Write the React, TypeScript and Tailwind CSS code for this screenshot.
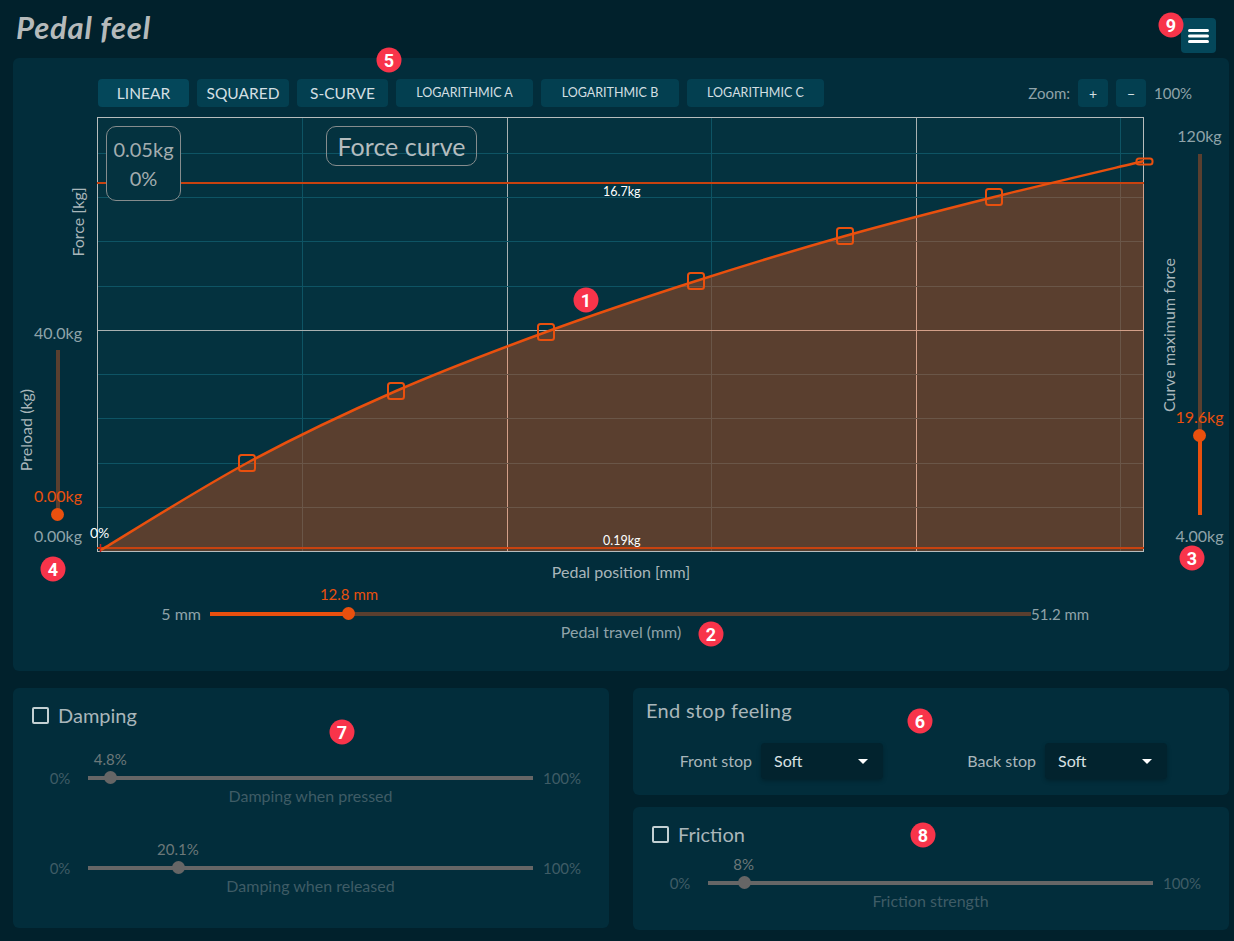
const ORIGIN = { x: 97, y: 117 };
const handles = [
  [247, 463],
  [396, 391],
  [546, 332],
  [696, 281],
  [845, 236],
  [994, 197],
];
const curvePts = [[101, 550], ...handles, [1144, 161]].map(([x, y]) => [x - ORIGIN.x, y - ORIGIN.y]);

// catmull-rom through the curve points
function curvePath(pts: number[][]) {
  let d = `M${pts[0][0]} ${pts[0][1]}`;
  for (let i = 0; i < pts.length - 1; i++) {
    const p0 = pts[i - 1] ?? pts[i];
    const p1 = pts[i];
    const p2 = pts[i + 1];
    const p3 = pts[i + 2] ?? p2;
    const c1x = p1[0] + (p2[0] - p0[0]) / 6;
    const c1y = p1[1] + (p2[1] - p0[1]) / 6;
    const c2x = p2[0] - (p3[0] - p1[0]) / 6;
    const c2y = p2[1] - (p3[1] - p1[1]) / 6;
    d += ` C${c1x} ${c1y} ${c2x} ${c2y} ${p2[0]} ${p2[1]}`;
  }
  return d;
}

const vLines = [205.3, 410, 614.5, 819, 1023.7];
const hLines = [36.4, 80.6, 124.9, 169.1, 213.4, 257.6, 301.9, 346.1, 390.4];

function GridLines({ dim, bright }: { dim: string; bright: string }) {
  return (
    <g strokeWidth="1" shapeRendering="crispEdges">
      {vLines.map((x, i) => (
        <line key={x} x1={x} y1="0" x2={x} y2="435" stroke={i % 2 === 1 ? bright : dim} />
      ))}
      {hLines.map((y, i) => (
        <line key={y} x1="0" y1={y} x2="1047" y2={y} stroke={i === 4 ? bright : dim} />
      ))}
    </g>
  );
}

function ForceChart() {
  const path = curvePath(curvePts);
  const area = `${path} L1047 435 L0 435 Z`;
  return (
    <div className="relative h-[435px] w-[1047px] bg-[#04323f]">
      <svg width="1047" height="435" viewBox="0 0 1047 435" className="block overflow-visible">
        <defs>
          <clipPath id="under-curve">
            <path d={area} />
          </clipPath>
          <clipPath id="under-limit">
            <rect x="0" y="66" width="1047" height="369" />
          </clipPath>
        </defs>
        <GridLines dim="#0e5464" bright="#a9b1b1" />
        <g clipPath="url(#under-curve)">
          <rect x="0" y="66" width="1047" height="369" fill="#5a3f2f" />
          <g clipPath="url(#under-limit)">
            <GridLines dim="#6a5648" bright="#d39f88" />
          </g>
        </g>
        <rect x="0.5" y="0.5" width="1046" height="434" fill="none" stroke="#b7bcbc" strokeWidth="1" />
        <line x1="1046.5" y1="66" x2="1046.5" y2="431" stroke="#d39f88" strokeWidth="1" />
        <line x1="0" y1="66" x2="1047" y2="66" stroke="#c8420f" strokeWidth="2" />
        <line x1="0" y1="431" x2="1047" y2="431" stroke="#c8420f" strokeWidth="2" />
        <line x1="3.5" y1="427" x2="3.5" y2="435" stroke="#c8201f" strokeWidth="1.5" />
        <path d={path} fill="none" stroke="#e9500e" strokeWidth="2.5" />
        {handles.map(([x, y]) => (
          <rect
            key={x}
            x={x - ORIGIN.x - 8}
            y={y - ORIGIN.y - 8}
            width="16"
            height="16"
            rx="2.5"
            fill="none"
            stroke="#e9500e"
            strokeWidth="2"
          />
        ))}
        <rect x="1039.5" y="41.5" width="16" height="6" rx="2.5" fill="none" stroke="#e9500e" strokeWidth="2" />
      </svg>
      <div className="absolute left-[9px] top-[9px] flex h-[75px] w-[75px] flex-col items-center justify-center rounded-[10px] border border-[#868c8d] bg-[#04323f] text-[20px] leading-[29px] text-[#a3adaf]">
        <span>0.05kg</span>
        <span>0%</span>
      </div>
      <div className="absolute left-[229px] top-[9px] flex h-[40px] w-[151px] items-center justify-center rounded-[10px] border border-[#868c8d] pt-[1px] text-[25px] text-[#b4bcbe]">
        Force curve
      </div>
      <span className="absolute left-[506px] top-[67px] text-[12.5px] leading-[16px] text-white">16.7kg</span>
      <span className="absolute left-[506px] top-[416px] text-[12.5px] leading-[16px] text-white">0.19kg</span>
      <span className="absolute left-[-7px] top-[408px] text-[14px] leading-[16px] text-white">0%</span>
    </div>
  );
}

function PresetButton({ label, width, small, active }: { label: string; width: number; small?: boolean; active?: boolean }) {
  return (
    <button
      className={`flex h-[28px] items-center justify-center rounded-[4px] pt-[1px] text-[#d3dfe2] ${
        active ? "bg-[#04475a]" : "bg-[#033f50]"
      } ${small ? "text-[12.5px]" : "text-[15.5px]"}`}
      style={{ width }}
    >
      {label}
    </button>
  );
}

function VerticalTrack({
  height,
  thumbBottom,
  value,
  filled,
}: {
  height: number;
  thumbBottom: number;
  value: string;
  filled: boolean;
}) {
  return (
    <div className="relative w-[4px] bg-[#5a3f2f]" style={{ height }}>
      {filled && <div className="absolute bottom-0 left-0 w-[4px] bg-[#e9500e]" style={{ height: thumbBottom }} />}
      <div
        className="absolute left-[-5px] h-[13px] w-[13px] rounded-full bg-[#e9500e]"
        style={{ bottom: thumbBottom - 6 }}
      />
      <span
        className="absolute left-1/2 -translate-x-1/2 whitespace-nowrap text-[16px] leading-[20px] text-[#e9500e]"
        style={{ bottom: thumbBottom + 9 }}
      >
        {value}
      </span>
    </div>
  );
}

function HSlider({
  min,
  max,
  value,
  pct,
  caption,
  labelW,
}: {
  min: string;
  max: string;
  value: string;
  pct: number;
  caption: string;
  labelW: number;
}) {
  return (
    <div className="flex flex-col">
      <div className="flex h-[20px] items-center text-[15px] text-[#3f5c66]">
        <span className="text-center" style={{ width: labelW }}>
          {min}
        </span>
        <div className="relative h-[4px] w-[445px] bg-[#666666]">
          <div
            className="absolute top-[-5px] ml-[-6px] h-[13px] w-[13px] rounded-full bg-[#666666]"
            style={{ left: `${pct}%` }}
          />
          <span
            className="absolute top-[-27px] -translate-x-1/2 whitespace-nowrap text-[15px] leading-[20px] text-[#6c7879]"
            style={{ left: `${pct}%` }}
          >
            {value}
          </span>
        </div>
        <span className="w-[58px] text-center">{max}</span>
      </div>
      <div className="text-center text-[16px] leading-[16px] text-[#3f5c66]" style={{ marginLeft: labelW, width: 445 }}>
        {caption}
      </div>
    </div>
  );
}

function Check({ label }: { label: string }) {
  return (
    <div className="flex h-[26px] items-center gap-[9px] text-[20px] text-[#a9b6ba]">
      <span className="h-[17px] w-[17px] rounded-[2px] border-2 border-[#c3d0d3]" />
      {label}
    </div>
  );
}

function StopSelect({ label, labelW }: { label: string; labelW: number }) {
  return (
    <div className="flex items-center">
      <span className="text-right text-[16px] text-[#a9b6ba]" style={{ width: labelW }}>
        {label}
      </span>
      <div className="ml-[9px] flex h-[36px] w-[122px] items-center justify-between rounded-[4px] bg-[#02232e] pl-[13px] pr-[15px] text-[16px] text-[#d7e0e2] shadow-[0_2px_4px_rgba(0,0,0,0.25)]">
        Soft
        <span className="h-0 w-0 border-x-[5px] border-t-[5px] border-x-transparent border-t-white" />
      </div>
    </div>
  );
}

const badges: [string, number, number][] = [
  ["1", 586, 300],
  ["2", 711, 634],
  ["3", 1192, 558],
  ["4", 53, 569],
  ["5", 389, 60],
  ["6", 920, 721],
  ["7", 342, 732],
  ["8", 923, 835],
  ["9", 1171, 25],
];

export default function App() {
  return (
    <div className="relative h-[941px] w-[1234px] overflow-hidden bg-[#01212c] pl-[13px] pr-[5px] font-['Lato','Liberation_Sans',sans-serif]">
      <div className="flex h-[58px] justify-between">
        <h1 className="ml-[3px] pt-[7px] text-[31px] font-bold italic leading-[40px] tracking-[0.8px] text-[#b5babb]">
          Pedal feel
        </h1>
        <button className="mr-[13px] mt-[18px] flex h-[35px] w-[35px] items-center justify-center rounded-[4px] bg-[#04475a]">
          <svg width="21" height="14" viewBox="0 0 21 14">
            <rect x="0" y="0" width="21" height="3" rx="1.5" fill="white" />
            <rect x="0" y="5.5" width="21" height="3" rx="1.5" fill="white" />
            <rect x="0" y="11" width="21" height="3" rx="1.5" fill="white" />
          </svg>
        </button>
      </div>

      <section className="h-[613px] rounded-[6px] bg-[#022d3b] pt-[21px]">
        <div className="flex h-[28px] items-center pl-[85px] pr-[38px]">
          <div className="flex gap-[8px]">
            <PresetButton label="LINEAR" width={91} active />
            <PresetButton label="SQUARED" width={92} />
            <PresetButton label="S-CURVE" width={91} />
            <PresetButton label="LOGARITHMIC A" width={137} small />
            <PresetButton label="LOGARITHMIC B" width={138} small />
            <PresetButton label="LOGARITHMIC C" width={137} small />
          </div>
          <div className="ml-auto flex items-center gap-[8px] text-[15px] text-[#8fa3a9]">
            <span>Zoom:</span>
            <button className="h-[28px] w-[30px] rounded-[4px] bg-[#033f50] text-[14px] text-[#d3dfe2]">+</button>
            <button className="h-[28px] w-[30px] rounded-[4px] bg-[#033f50] text-[14px] text-[#d3dfe2]">−</button>
            <span className="w-[37px] text-right">100%</span>
          </div>
        </div>

        <div className="mt-[10px] grid h-[435px] grid-cols-[84px_1047px_1fr]">
          <div className="relative flex flex-col items-center justify-end pb-[6px] pl-[6px] text-[16px] leading-[20px] text-[#8fa3a9]">
            <span className="mb-[7px]">40.0kg</span>
            <VerticalTrack height={165} thumbBottom={0} value="0.00kg" filled={false} />
            <span className="mt-[11px]">0.00kg</span>
            <span className="absolute left-[13px] top-[313px] -translate-x-1/2 -translate-y-1/2 -rotate-90 whitespace-nowrap text-[16px] text-[#a9b6ba]">
              Preload (kg)
            </span>
            <span className="absolute left-[65px] top-[105px] -translate-x-1/2 -translate-y-1/2 -rotate-90 whitespace-nowrap text-[16px] text-[#a9b6ba]">
              Force [kg]
            </span>
          </div>

          <ForceChart />

          <div className="relative flex flex-col items-center pb-[6px] pl-[26px] text-[16px] leading-[20px] text-[#8fa3a9]">
            <span className="mt-[9px]">120kg</span>
            <div className="mt-[8px]">
              <VerticalTrack height={361} thumbBottom={79} value="19.6kg" filled />
            </div>
            <span className="mt-[11px]">4.00kg</span>
            <span className="absolute left-[25px] top-[218px] -translate-x-1/2 -translate-y-1/2 -rotate-90 whitespace-nowrap text-[16px] text-[#a9b6ba]">
              Curve maximum force
            </span>
          </div>
        </div>

        <div className="mt-[10px] text-center text-[16px] leading-[20px] text-[#a9b6ba]">Pedal position [mm]</div>

        <div className="mt-[22px] flex h-[20px] items-center pl-[147px] text-[15px] text-[#8fa3a9]">
          <span className="w-[41px] text-right text-[16px]">5 mm</span>
          <div className="relative ml-[9px] h-[4px] w-[821px] bg-[#5a3f2f]">
            <div className="absolute left-0 top-0 h-[4px] w-[138px] bg-[#e9500e]" />
            <div className="absolute left-[132px] top-[-5px] h-[13px] w-[13px] rounded-full bg-[#e9500e]" />
            <span className="absolute left-[139px] top-[-28px] -translate-x-1/2 whitespace-nowrap leading-[20px] text-[#e9500e]">
              12.8 mm
            </span>
          </div>
          <span>51.2 mm</span>
        </div>
        <div className="mt-[-2px] text-center text-[16px] leading-[20px] text-[#8fa3a9]">Pedal travel (mm)</div>
      </section>

      <div className="mt-[17px] grid grid-cols-[596px_596px] gap-x-[24px]">
        <section className="mb-[2px] h-[240px] rounded-[6px] bg-[#022d3b] pl-[19px] pt-[14px]">
          <Check label="Damping" />
          <div className="mt-[40px] flex flex-col gap-[54px]">
            <HSlider min="0%" max="100%" value="4.8%" pct={5} caption="Damping when pressed" labelW={56} />
            <HSlider min="0%" max="100%" value="20.1%" pct={20.2} caption="Damping when released" labelW={56} />
          </div>
        </section>

        <div className="flex flex-col gap-[12px]">
          <section className="h-[107px] rounded-[6px] bg-[#022d3b] pl-[13px] pt-[9px]">
            <h2 className="text-[20px] leading-[26px] tracking-[0.3px] text-[#a9b6ba]">End stop feeling</h2>
            <div className="mt-[20px] flex gap-[83px] pl-[32px]">
              <StopSelect label="Front stop" labelW={74} />
              <StopSelect label="Back stop" labelW={70} />
            </div>
          </section>
          <section className="h-[123px] rounded-[6px] bg-[#022d3b] pl-[19px] pt-[14px]">
            <Check label="Friction" />
            <div className="mt-[26px]">
              <HSlider min="0%" max="100%" value="8%" pct={8} caption="Friction strength" labelW={56} />
            </div>
          </section>
        </div>
      </div>

      {badges.map(([n, x, y]) => (
        <span
          key={n}
          className="absolute flex h-[25px] w-[25px] -translate-x-1/2 -translate-y-1/2 items-center justify-center rounded-full bg-[#f8344a] font-['Roboto',sans-serif] text-[18px] font-bold text-white"
          style={{ left: x, top: y }}
        >
          {n}
        </span>
      ))}
    </div>
  );
}
